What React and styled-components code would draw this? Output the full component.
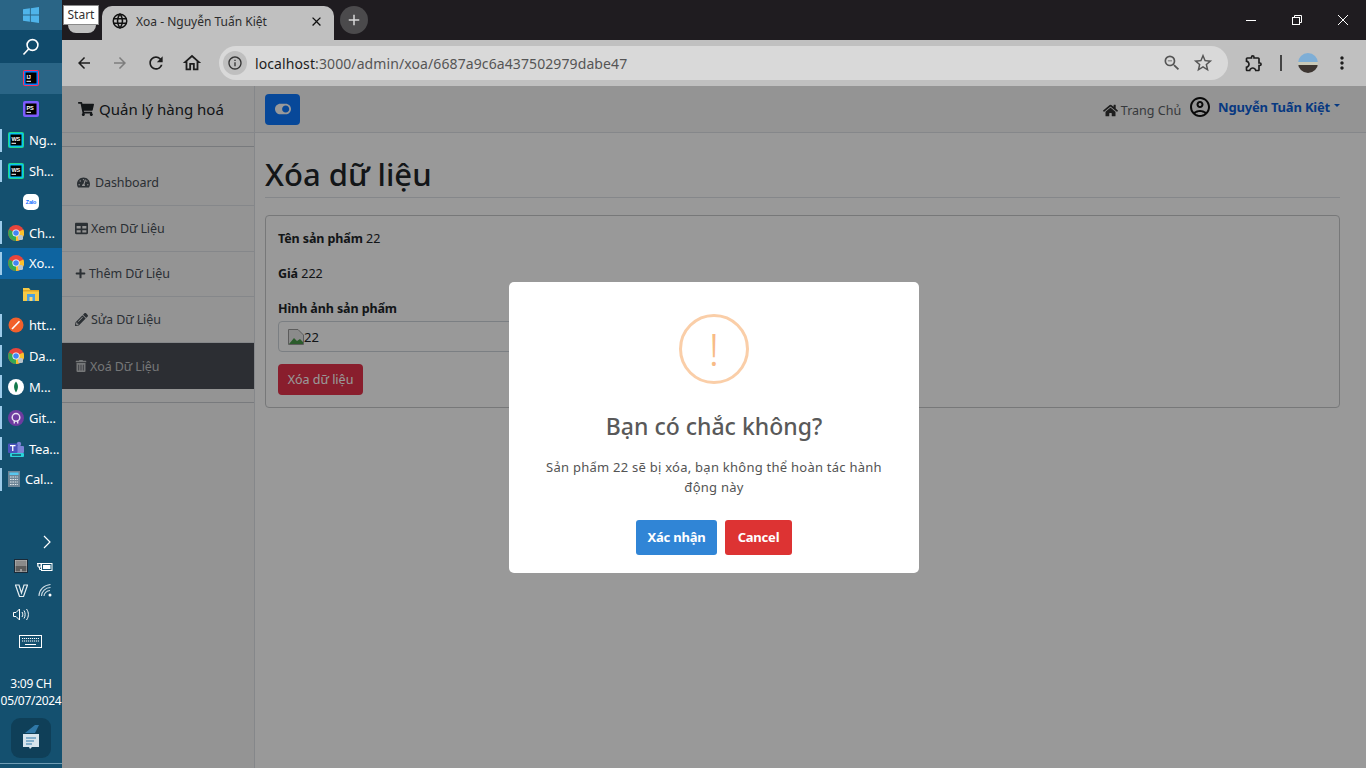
import React from 'react';
import styled, { createGlobalStyle } from 'styled-components';
import {
	FaShoppingCart,
	FaTachometerAlt,
	FaTable,
	FaPlus,
	FaPencilAlt,
	FaTrashAlt,
	FaHome,
	FaToggleOn
} from 'react-icons/fa';
import {
	MdArrowBack,
	MdArrowForward,
	MdRefresh,
	MdOutlineHome,
	MdInfoOutline,
	MdOutlineZoomOut,
	MdStarBorder,
	MdOutlineExtension,
	MdMoreVert,
	MdOutlineAccountCircle,
	MdClose,
	MdAdd
} from 'react-icons/md';
import { TbWorld } from 'react-icons/tb';

const UI_FONT = '"Noto Sans", "Open Sans", sans-serif';

const GlobalStyle = createGlobalStyle`
	html, body {
		margin: 0;
		padding: 0;
		height: 100%;
		overflow: hidden;
		background: #fff;
		font-family: ${UI_FONT};
	}
	* {
		box-sizing: border-box;
	}
`;

const Screen = styled.div`
	width: 100vw;
	height: 100vh;
	display: flex;
	overflow: hidden;
`;

/* taskbar */
const Taskbar = styled.aside`
	width: 62px;
	flex: none;
	display: flex;
	flex-direction: column;
	background: #14506f;
	color: #fff;
`;

const TaskRow = styled.div`
	position: relative;
	height: ${(p) => p.$h || 30.85}px;
	flex: none;
	display: flex;
	align-items: center;
	justify-content: ${(p) => (p.$label ? 'flex-start' : 'center')};
	padding-left: ${(p) => (p.$label ? '8px' : '0')};
	gap: 5px;
	font-size: 13px;
	letter-spacing: -0.2px;
	background: ${(p) => p.$bg || 'transparent'};
	&::before {
		content: '';
		display: ${(p) => (p.$label ? 'block' : 'none')};
		position: absolute;
		left: 0;
		top: 4px;
		bottom: 4px;
		width: 2px;
		background: #9ccbea;
	}
`;

const Tray = styled.div`
	margin-top: auto;
	display: flex;
	flex-direction: column;
	align-items: center;
`;

const TrayGrid = styled.div`
	width: 100%;
	display: grid;
	grid-template-columns: 12px 24px 24px;
	grid-auto-rows: 24px;
	justify-items: center;
	align-items: center;
	> svg:nth-child(3n + 1) {
		grid-column: 3;
	}
`;

const TrayRow = styled.div`
	display: grid;
	grid-template-columns: 24px 24px;
	width: 100%;
	padding-left: 9px;
	height: 24px;
	justify-items: center;
	align-items: center;
`;

const Chevron = styled.div`
	width: 100%;
	display: flex;
	justify-content: flex-end;
	padding-right: 11px;
	height: 24px;
	align-items: center;
`;

const KeyboardRow = styled.div`
	height: 30px;
	display: flex;
	align-items: center;
	margin-left: -2px;
`;

const Clock = styled.div`
	margin-top: 19px;
	font-size: 12px;
	line-height: 17px;
	text-align: center;
	white-space: nowrap;
	letter-spacing: -0.3px;
`;

const NoteWrap = styled.div`
	margin: 9px 0 5px;
	width: 40px;
	height: 40px;
	border-radius: 9px;
	background: #0f3f58;
	display: flex;
	align-items: center;
	justify-content: center;
`;

const BottomLine = styled.div`
	width: 100%;
	height: 1px;
	background: #6f9db5;
	margin-bottom: 4px;
`;

/* browser */
const Browser = styled.div`
	flex: 1;
	min-width: 0;
	position: relative;
	display: flex;
	flex-direction: column;
`;

const TabStrip = styled.div`
	height: 40px;
	flex: none;
	display: flex;
	align-items: flex-end;
	background: #1f1c20;
	padding-left: 6px;
`;

const PinnedTab = styled.div`
	width: 28px;
	height: 27px;
	margin-bottom: 7px;
	border-radius: 8px;
	background: #c0c0c0;
`;

const Tab = styled.div`
	width: 232px;
	height: 34px;
	margin-left: 6px;
	padding: 0 10px 4px 9px;
	display: flex;
	align-items: center;
	gap: 7px;
	border-radius: 10px 10px 0 0;
	background: #c0c0c0;
	color: #2c2c2c;
	font-size: 12px;
	white-space: nowrap;
	span {
		flex: 1;
	}
`;

const NewTab = styled.div`
	width: 28px;
	height: 28px;
	margin: 0 0 6px 6px;
	border-radius: 50%;
	background: #4b4a4c;
	color: #d8d8d8;
	display: flex;
	align-items: center;
	justify-content: center;
`;

const WinControls = styled.div`
	margin-left: auto;
	align-self: stretch;
	display: flex;
`;

const WinButton = styled.div`
	width: 46px;
	display: flex;
	align-items: center;
	justify-content: center;
	color: #fff;
`;

const Tooltip = styled.div`
	position: absolute;
	left: 1px;
	top: 5px;
	width: 36px;
	height: 20px;
	background: #fff;
	border: 1px solid #8a8a8a;
	color: #333;
	font-size: 12px;
	line-height: 18px;
	text-align: center;
	z-index: 20;
`;

const Toolbar = styled.div`
	height: 46px;
	flex: none;
	display: flex;
	align-items: center;
	background: #c0c0c0;
	padding-left: 4px;
	color: #1d1d1d;
`;

const NavButton = styled.div`
	width: 36px;
	height: 36px;
	display: flex;
	align-items: center;
	justify-content: center;
	color: ${(p) => (p.$off ? '#7d7d7d' : '#1d1d1d')};
`;

const Omnibox = styled.div`
	flex: 1;
	height: 34px;
	margin-left: 9px;
	padding: 0 14px 0 4px;
	display: flex;
	align-items: center;
	border-radius: 17px;
	background: #d9d9d9;
	color: #555;
	font-size: 14px;
`;

const InfoBadge = styled.div`
	width: 24px;
	height: 24px;
	border-radius: 50%;
	background: #bfbfbf;
	color: #333;
	display: flex;
	align-items: center;
	justify-content: center;
`;

const Url = styled.div`
	flex: 1;
	margin-left: 8px;
	white-space: nowrap;
	letter-spacing: 0.1px;
	b {
		font-weight: 400;
		color: #1d1d1d;
	}
`;

const OmniIcons = styled.div`
	display: flex;
	align-items: center;
	gap: 10px;
	color: #555;
`;

const ToolEnd = styled.div`
	display: flex;
	align-items: center;
	width: 138px;
	padding-left: 16px;
`;

const ToolDivider = styled.div`
	width: 2px;
	height: 16px;
	margin-left: 16px;
	background: #444;
`;

const Avatar = styled.div`
	width: 20px;
	height: 20px;
	margin: 0 14px 0 16px;
	border-radius: 50%;
	background: linear-gradient(180deg, #7eaed6 0 45%, #c9c9b8 45% 60%, #3c3531 60%);
`;

/* admin page */
const Page = styled.div`
	flex: 1;
	min-height: 0;
	position: relative;
	display: flex;
	background: #fff;
`;

const Sidebar = styled.nav`
	width: 193px;
	flex: none;
	background: #f7f7f7;
	border-right: 1px solid #dee2e6;
	color: #495057;
`;

const Brand = styled.div`
	height: 47px;
	padding-left: 16px;
	display: flex;
	align-items: center;
	gap: 5px;
	border-bottom: 1px solid #dee2e6;
	color: #212529;
	font-size: 15px;
`;

const SideLine = styled.div`
	height: 1px;
	background: #c8ccd0;
	margin-top: ${(p) => p.$top}px;
`;

const NavList = styled.div`
	margin-top: 13px;
`;

const NavItem = styled.div`
	height: 45.8px;
	display: flex;
	align-items: center;
	gap: ${(p) => p.$gap || 3}px;
	padding-left: ${(p) => p.$pad || 13}px;
	font-size: 12.5px;
	letter-spacing: -0.1px;
	color: ${(p) => (p.$active ? '#c4c6c8' : '#495057')};
	background: ${(p) => (p.$active ? '#4a4d55' : 'transparent')};
	border-bottom: ${(p) => (p.$active ? 'none' : '1px solid #dee2e6')};
`;

const Main = styled.main`
	flex: 1;
	min-width: 0;
	display: flex;
	flex-direction: column;
`;

const Topbar = styled.header`
	height: 47px;
	flex: none;
	padding: 0 26px 0 10px;
	display: flex;
	align-items: center;
	border-bottom: 1px solid #dee2e6;
	background: #f7f7f7;
`;

const ToggleButton = styled.div`
	width: 35px;
	height: 31px;
	border-radius: 4px;
	background: #0d78ff;
	color: #fff;
	display: flex;
	align-items: center;
	justify-content: center;
`;

const HomeLink = styled.div`
	margin-left: auto;
	margin-top: 2px;
	display: flex;
	align-items: center;
	gap: 3px;
	font-size: 12.5px;
	color: #5c6166;
`;

const UserLink = styled.div`
	margin: -5px 0 0 7px;
	display: flex;
	align-items: center;
	gap: 6px;
	font-size: 13px;
	font-weight: 700;
	letter-spacing: -0.2px;
	color: #0d5fd8;
	svg {
		color: #111;
	}
	&::after {
		content: '';
		border-top: 3px solid currentColor;
		border-left: 3px solid transparent;
		border-right: 3px solid transparent;
		margin-left: -2px;
		margin-top: -2px;
	}
`;

const Content = styled.div`
	padding: 21px 26px 0 10px;
`;

const Title = styled.h1`
	margin: 0;
	height: 44px;
	line-height: 40px;
	font-size: 31px;
	font-weight: 500;
	color: #212529;
	border-bottom: 1px solid #dee2e6;
`;

const Card = styled.section`
	margin-top: 17px;
	padding: 12px;
	border: 1px solid #c6c8ca;
	border-radius: 4px;
	color: #212529;
`;

const Field = styled.div`
	height: 21px;
	line-height: 21px;
	margin-bottom: 14px;
	font-size: 12.5px;
	white-space: nowrap;
	b {
		font-weight: 700;
		letter-spacing: -0.1px;
	}
`;

const FieldLabel = styled(Field)`
	margin-bottom: 2px;
`;

const ImageBox = styled.div`
	width: 400px;
	height: 31px;
	padding: 0 9px;
	display: flex;
	align-items: center;
	font-size: 13px;
	border: 1px solid #ced4da;
	border-radius: 4px;
`;

const DangerButton = styled.div`
	margin-top: 12px;
	width: 85px;
	height: 31px;
	border-radius: 4px;
	background: #e4324b;
	color: #fff;
	font-size: 12.5px;
	display: flex;
	align-items: center;
	justify-content: center;
	white-space: nowrap;
`;

/* dialog */
const Overlay = styled.div`
	position: absolute;
	inset: 0;
	display: flex;
	align-items: center;
	justify-content: center;
	background: rgba(0, 0, 0, 0.4);
`;

const Dialog = styled.div`
	width: 410px;
	height: 291px;
	padding-top: 32px;
	display: flex;
	flex-direction: column;
	align-items: center;
	border-radius: 5px;
	background: #fff;
`;

const WarnIcon = styled.div`
	width: 70px;
	height: 70px;
	border: 3px solid #facea8;
	border-radius: 50%;
	color: #f8bb86;
	display: flex;
	align-items: center;
	justify-content: center;
	font-size: 44px;
	font-weight: 300;
	line-height: 1;
`;

const DialogTitle = styled.h2`
	margin: 24px 0 0;
	font-size: 23px;
	line-height: 36px;
	font-weight: 500;
	color: #595959;
`;

const DialogText = styled.p`
	margin: 13px 0 0;
	width: 350px;
	text-align: center;
	font-size: 13px;
	line-height: 20px;
	letter-spacing: 0.25px;
	color: #545454;
`;

const DialogActions = styled.div`
	margin-top: 23px;
	display: flex;
	gap: 8px;
`;

const DialogButton = styled.div`
	width: ${(p) => p.$w}px;
	height: 35px;
	border-radius: 3px;
	background: ${(p) => p.$bg};
	color: #fff;
	font-size: 13px;
	font-weight: 700;
	letter-spacing: -0.2px;
	display: flex;
	align-items: center;
	justify-content: center;
`;

/* drawn icons */
const WinLogo = () => (
	<svg width="16" height="16" viewBox="0 0 16 16" fill="#4fb4ea">
		<path d="M0 2.3 6.9 1.3V7.5H0zM7.8 1.2 16 0V7.5H7.8zM0 8.4H6.9V14.7L0 13.7zM7.8 8.4H16V16L7.8 14.8z" />
	</svg>
);

const SearchGlass = () => (
	<svg width="18" height="18" viewBox="0 0 18 18" fill="none" stroke="#fff" strokeWidth="1.6">
		<circle cx="10.5" cy="7" r="5.4" />
		<path d="M6.6 11 1.5 16.5" />
	</svg>
);

const JetIcon = ({ label, from, to }) => (
	<svg width="16" height="16" viewBox="0 0 16 16">
		<rect x="0" y="0" width="16" height="16" rx="2" fill={from} />
		<rect x="1" y="1" width="14" height="14" fill={to} />
		<rect x="2.5" y="2.5" width="11" height="11" fill="#000" />
		<text x="3.5" y="8.5" fontSize="5.6" fontWeight="700" fill="#fff" fontFamily="Liberation Sans">
			{label}
		</text>
		<rect x="3.5" y="10.8" width="4.5" height="1" fill="#fff" />
	</svg>
);

const ChromeIcon = () => (
	<svg width="16" height="16" viewBox="0 0 16 16">
		<circle cx="8" cy="8" r="8" fill="#e8453c" />
		<path d="M8 8 1 4.5A8 8 0 0 0 8 16z" fill="#34a853" />
		<path d="M8 8V16A8 8 0 0 0 15.3 4.5z" fill="#fbc02d" />
		<circle cx="8" cy="8" r="3.6" fill="#fff" />
		<circle cx="8" cy="8" r="2.8" fill="#4285f4" />
		<rect x="10" y="10" width="5" height="5" rx="1.5" fill="#b9c4cc" />
	</svg>
);

const ZaloIcon = () => (
	<svg width="16" height="16" viewBox="0 0 16 16">
		<rect width="16" height="16" rx="5" fill="#fff" />
		<text x="8" y="10" textAnchor="middle" fontSize="5.4" fontWeight="700" fill="#0a68ff" fontFamily="Liberation Sans">
			Zalo
		</text>
	</svg>
);

const FolderIcon = () => (
	<svg width="16" height="14" viewBox="0 0 16 14">
		<path d="M0 1H6L7.5 3H16V14H0z" fill="#f6c945" />
		<rect y="3" width="16" height="1.5" fill="#e0a526" />
		<rect x="4" y="7" width="8" height="7" fill="#4a9fe0" />
		<rect x="6.5" y="10" width="3" height="4" fill="#f6d774" />
	</svg>
);

const PostmanIcon = () => (
	<svg width="16" height="16" viewBox="0 0 16 16">
		<circle cx="8" cy="8" r="7.5" fill="#f1602c" />
		<path d="M4 12 11.5 4.2" stroke="#fff" strokeWidth="1.6" />
	</svg>
);

const MongoIcon = () => (
	<svg width="16" height="16" viewBox="0 0 16 16">
		<circle cx="8" cy="8" r="8" fill="#fff" />
		<path d="M8 2.5C10.6 5.5 10.6 9.5 8 13.5 5.4 9.5 5.4 5.5 8 2.5z" fill="#13794b" />
	</svg>
);

const GithubIcon = () => (
	<svg width="16" height="16" viewBox="0 0 16 16">
		<circle cx="8" cy="8" r="8" fill="#6e3ba0" />
		<circle cx="8" cy="7.4" r="3.8" fill="none" stroke="#e9e0f2" strokeWidth="1.5" />
		<path d="M6.3 10.5V13.5M9.7 10.5V13.5" stroke="#e9e0f2" strokeWidth="1.4" />
	</svg>
);

const TeamsIcon = () => (
	<svg width="16" height="16" viewBox="0 0 16 16">
		<circle cx="11" cy="3" r="2.2" fill="#7b83d6" />
		<rect x="6" y="5" width="10" height="7" rx="1" fill="#7b83d6" />
		<rect x="0" y="2.5" width="9.5" height="9.5" rx="1" fill="#4b53bc" />
		<path d="M2 4.6H7.5M4.75 4.6V10" stroke="#fff" strokeWidth="1.3" />
		<rect x="2" y="12" width="14" height="4" rx="1" fill="#29d3d8" />
		<rect x="4" y="13.4" width="9" height="1.2" fill="#102a4a" />
	</svg>
);

const CalcIcon = () => (
	<svg width="12" height="16" viewBox="0 0 12 16">
		<rect width="12" height="16" fill="#6d8597" />
		<rect x="1.5" y="1.5" width="9" height="2.5" fill="#57c7f0" />
		<path d="M2 6H10M2 8.5H10M2 11H10M2 13.5H10" stroke="#dfe6ea" strokeWidth="1.2" strokeDasharray="1.6 0.8" />
	</svg>
);

const TabletTray = () => (
	<svg width="14" height="14" viewBox="0 0 14 14">
		<rect x="0.5" y="0.5" width="13" height="13" fill="#bbb" stroke="#1a2a38" />
		<rect x="1.5" y="1.5" width="11" height="5.5" fill="#8a8a8a" />
		<rect x="1.5" y="7" width="11" height="5.5" fill="#5c5c5c" />
		<path d="M7 10V12.5" stroke="#ddd" />
	</svg>
);

const BatteryTray = () => (
	<svg width="16" height="11" viewBox="0 0 16 11" fill="none" stroke="#fff">
		<path d="M1 2.5H4V6H1zM2.5 6V8.5H5M0 4H1M0 2.5H1" />
		<rect x="4.5" y="2.5" width="10.5" height="7" />
		<rect x="6" y="4" width="7.5" height="4" fill="#fff" stroke="none" />
	</svg>
);

const VTray = () => (
	<svg width="13" height="13" viewBox="0 0 13 13" fill="none" stroke="#e6eef2" strokeWidth="1.2">
		<path d="M0.5 1H4L6.5 9 9 1H12.5L8.5 12.5H4.5z" />
	</svg>
);

const WifiTray = () => (
	<svg width="14" height="14" viewBox="0 0 14 14" fill="none" stroke="#cfdde5" strokeWidth="1.1">
		<path d="M1 13C1 7 6 2 12.5 1.5M3.5 13C3.5 8.5 7.5 4.5 12.5 4.5M6 13C6 10.5 8.5 7.5 12 7.5" />
		<circle cx="12" cy="12" r="1.5" fill="#fff" stroke="none" />
	</svg>
);

const VolumeTray = () => (
	<svg width="17" height="13" viewBox="0 0 17 13" fill="none" stroke="#fff">
		<path d="M0.5 4.5H3L6.5 1V12L3 8.5H0.5z" />
		<path d="M9 4C10 5.5 10 7.5 9 9M11 2.5C12.5 5 12.5 8 11 10.5M13.5 1C16 4.5 16 8.5 13.5 12" />
	</svg>
);

const KeyboardTray = () => (
	<svg width="23" height="13" viewBox="0 0 23 13" fill="none" stroke="#fff">
		<rect x="0.5" y="0.5" width="22" height="12" />
		<path d="M3 3.5H20M3 6H20" strokeDasharray="1.2 0.8" />
		<path d="M6 9.5H17" />
	</svg>
);

const NoteIcon = () => (
	<svg width="18" height="26" viewBox="0 0 18 26">
		<path d="M3 8 13 0H17L13 8z" fill="#2f78a8" />
		<path d="M1 9H17V22H10L8 24 7 22H1z" fill="#d7e4ec" />
		<path d="M4 13H14M4 16H12M4 19H10" stroke="#2f78a8" strokeWidth="1.2" />
	</svg>
);

const RestoreIcon = () => (
	<svg width="10" height="10" viewBox="0 0 10 10" fill="none" stroke="#fff">
		<rect x="0.5" y="2.5" width="7" height="7" />
		<path d="M2.5 2.5V0.5H9.5V7.5H7.5" />
	</svg>
);

const MinIcon = () => (
	<svg width="10" height="10" viewBox="0 0 10 10" stroke="#fff">
		<path d="M0 5.5H10" />
	</svg>
);

const CloseIcon = () => (
	<svg width="10" height="10" viewBox="0 0 10 10" stroke="#fff">
		<path d="M0 0 10 10M10 0 0 10" />
	</svg>
);

const BrokenImage = () => (
	<svg width="16" height="16" viewBox="0 0 16 16">
		<path d="M0.5 0.5H10L15.5 6V15.5H0.5z" fill="#e8e8e8" stroke="#9a9a9a" />
		<path d="M1 15 6 9l3 3 3-2 3 3v2z" fill="#4a9a4a" />
	</svg>
);

const taskItems = [
	{ label: 'Ng...', icon: <JetIcon label="WS" from="#21d789" to="#07c3f2" /> },
	{ label: 'Sh...', icon: <JetIcon label="WS" from="#21d789" to="#07c3f2" /> },
	{ icon: <ZaloIcon /> },
	{ label: 'Ch...', icon: <ChromeIcon /> },
	{ label: 'Xo...', icon: <ChromeIcon />, bg: '#0e64a0' },
	{ icon: <FolderIcon /> },
	{ label: 'htt...', icon: <PostmanIcon /> },
	{ label: 'Da...', icon: <ChromeIcon /> },
	{ label: 'M...', icon: <MongoIcon /> },
	{ label: 'Git...', icon: <GithubIcon /> },
	{ label: 'Tea...', icon: <TeamsIcon /> },
	{ label: 'Cal...', icon: <CalcIcon /> }
];

const App = () => (
	<Screen>
		<GlobalStyle />
		<Taskbar>
			<TaskRow $h={30} $bg="#2a6586">
				<WinLogo />
			</TaskRow>
			<TaskRow $h={33} $bg="#104a6b">
				<SearchGlass />
			</TaskRow>
			<TaskRow $bg="#2a6586">
				<JetIcon label="IJ" from="#fe315d" to="#087cfa" />
			</TaskRow>
			<TaskRow>
				<JetIcon label="PS" from="#7d5cff" to="#7d5cff" />
			</TaskRow>
			{taskItems.map((item, i) => (
				<TaskRow key={i} $label={item.label} $bg={item.bg}>
					{item.icon}
					{item.label}
				</TaskRow>
			))}
			<Tray>
				<Chevron>
					<svg width="8" height="14" viewBox="0 0 8 14" fill="none" stroke="#fff" strokeWidth="1.2">
						<path d="M1 1 7 7 1 13" />
					</svg>
				</Chevron>
				<TrayRow>
					<TabletTray />
					<BatteryTray />
				</TrayRow>
				<TrayRow>
					<VTray />
					<WifiTray />
				</TrayRow>
				<TrayRow>
					<VolumeTray />
				</TrayRow>
				<KeyboardRow>
					<KeyboardTray />
				</KeyboardRow>
				<Clock>
					3:09 CH
					<br />
					05/07/2024
				</Clock>
				<NoteWrap>
					<NoteIcon />
				</NoteWrap>
				<BottomLine />
			</Tray>
		</Taskbar>

		<Browser>
			<Tooltip>Start</Tooltip>
			<TabStrip>
				<PinnedTab />
				<Tab>
					<TbWorld size={18} color="#111" />
					<span>Xoa - Nguyễn Tuấn Kiệt</span>
					<MdClose size={15} color="#111" />
				</Tab>
				<NewTab>
					<MdAdd size={18} />
				</NewTab>
				<WinControls>
					<WinButton>
						<MinIcon />
					</WinButton>
					<WinButton>
						<RestoreIcon />
					</WinButton>
					<WinButton>
						<CloseIcon />
					</WinButton>
				</WinControls>
			</TabStrip>
			<Toolbar>
				<NavButton>
					<MdArrowBack size={18} />
				</NavButton>
				<NavButton $off>
					<MdArrowForward size={18} />
				</NavButton>
				<NavButton>
					<MdRefresh size={20} />
				</NavButton>
				<NavButton>
					<MdOutlineHome size={22} />
				</NavButton>
				<Omnibox>
					<InfoBadge>
						<MdInfoOutline size={16} />
					</InfoBadge>
					<Url>
						<b>localhost</b>:3000/admin/xoa/6687a9c6a437502979dabe47
					</Url>
					<OmniIcons>
						<MdOutlineZoomOut size={20} />
						<MdStarBorder size={22} />
					</OmniIcons>
				</Omnibox>
				<ToolEnd>
					<MdOutlineExtension size={20} />
					<ToolDivider />
					<Avatar />
					<MdMoreVert size={20} />
				</ToolEnd>
			</Toolbar>
			<Page>
				<Sidebar>
					<Brand>
						<FaShoppingCart size={16} />
						Quản lý hàng hoá
					</Brand>
					<SideLine $top={13} />
					<NavList>
						<NavItem $pad={15} $gap={5}>
							<FaTachometerAlt size={13} />
							Dashboard
						</NavItem>
						<NavItem>
							<FaTable size={13} />
							Xem Dữ Liệu
						</NavItem>
						<NavItem>
							<FaPlus size={11} />
							Thêm Dữ Liệu
						</NavItem>
						<NavItem>
							<FaPencilAlt size={13} />
							Sửa Dữ Liệu
						</NavItem>
						<NavItem $active>
							<FaTrashAlt size={12} />
							Xoá Dữ Liệu
						</NavItem>
					</NavList>
					<SideLine $top={13} />
				</Sidebar>
				<Main>
					<Topbar>
						<ToggleButton>
							<FaToggleOn size={16} />
						</ToggleButton>
						<HomeLink>
							<FaHome size={15} color="#333" />
							Trang Chủ
						</HomeLink>
						<UserLink>
							<MdOutlineAccountCircle size={24} />
							Nguyễn Tuấn Kiệt
						</UserLink>
					</Topbar>
					<Content>
						<Title>Xóa dữ liệu</Title>
						<Card>
							<Field>
								<b>Tên sản phẩm</b> 22
							</Field>
							<Field>
								<b>Giá</b> 222
							</Field>
							<FieldLabel>
								<b>Hình ảnh sản phẩm</b>
							</FieldLabel>
							<ImageBox>
								<BrokenImage />
								22
							</ImageBox>
							<DangerButton>Xóa dữ liệu</DangerButton>
						</Card>
					</Content>
				</Main>
				<Overlay>
					<Dialog>
						<WarnIcon>!</WarnIcon>
						<DialogTitle>Bạn có chắc không?</DialogTitle>
						<DialogText>Sản phẩm 22 sẽ bị xóa, bạn không thể hoàn tác hành động này</DialogText>
						<DialogActions>
							<DialogButton $w={81} $bg="#3085d6">
								Xác nhận
							</DialogButton>
							<DialogButton $w={67} $bg="#dd3333">
								Cancel
							</DialogButton>
						</DialogActions>
					</Dialog>
				</Overlay>
			</Page>
		</Browser>
	</Screen>
);

export default App;
